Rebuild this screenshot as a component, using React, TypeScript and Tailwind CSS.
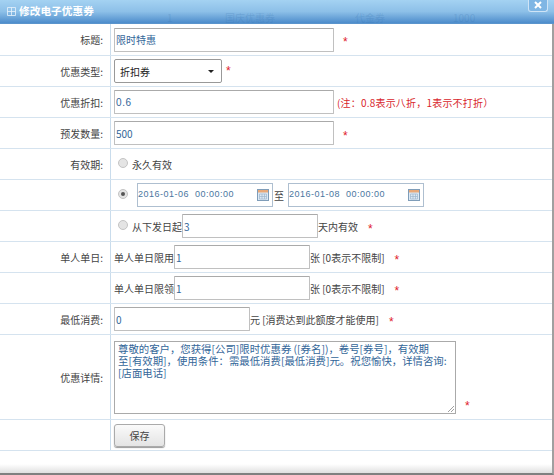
import type { ReactNode } from "react";

const font = "font-['Noto_Sans_CJK_SC','Liberation_Sans',sans-serif]";

function Row({ label, h = "h-[31px]", children }: { label?: string; h?: string; children: ReactNode }) {
  return (
    <div className={`flex ${h} shrink-0 border-b border-[#d5e3ef]`}>
      <div className="w-[111px] shrink-0 flex items-center justify-end pr-[7px] border-r border-[#c9dcec] text-[10px] text-[#444]">
        {label ? label + ":" : ""}
      </div>
      <div className="flex-1 flex items-center pl-[3px] text-[10px] text-[#444] whitespace-nowrap">{children}</div>
    </div>
  );
}

function Star({ className = "ml-[10px] mt-[5px]" }: { className?: string }) {
  return <span className={`text-[12px] leading-none text-[#e0202a] font-['Liberation_Sans',sans-serif] ${className}`}>*</span>;
}

function Input({ value, w, spaced }: { value: string; w: string; spaced?: boolean }) {
  return (
    <div
      className={`${w} h-6 shrink-0 flex items-center pl-[1px] border border-[#c0c0c0] border-t-[#aaa] rounded-[1px] bg-white text-[#336699] ${
        spaced ? "text-[10px] tracking-[0.6px] font-['Liberation_Sans',sans-serif]" : "text-[10px]"
      }`}
    >
      {value}
    </div>
  );
}

function Radio({ checked }: { checked?: boolean }) {
  return (
    <span className="w-[10px] h-[10px] ml-1 mr-1 -mt-[2px] shrink-0 rounded-full border border-[#c4c4c4] bg-[#e4e4e4] flex items-center justify-center">
      {checked && <span className="w-1 h-1 rounded-full bg-[#555]" />}
    </span>
  );
}

function CalendarIcon() {
  return (
    <svg width="12" height="12" viewBox="0 0 12 12" className="shrink-0">
      <rect x="0.5" y="0.5" width="11" height="11" fill="#dce9f5" stroke="#7f9db9" />
      <rect x="1" y="1" width="10" height="2.5" fill="#e8a878" />
      <path d="M2.5 5h7v5h-7z M2.5 7.5h7 M5 5v5 M7.5 5v5" fill="none" stroke="#9db6cc" strokeWidth="0.7" />
    </svg>
  );
}

function DateBox({ value }: { value: string }) {
  return (
    <div className="w-[136px] h-6 shrink-0 flex items-center justify-between border border-[#aebfd0] pr-[3px] bg-white">
      <span className="text-[9px] tracking-[0.5px] text-[#4a76a0] whitespace-pre font-['Liberation_Sans',sans-serif]">{value}</span>
      <CalendarIcon />
    </div>
  );
}

export default function App() {
  return (
    <div className={`w-[554px] h-[475px] bg-white overflow-hidden flex flex-col ${font}`}>
      <div className="relative h-[24px] shrink-0 overflow-hidden flex items-center justify-between pl-[7px] pr-[6px] bg-gradient-to-b from-[#a4d2f2] via-[#8dc0e8] to-[#4d8ccb] border-b border-[#5a94cc]">
        {/* page behind the dialog shows through the translucent title bar */}
        <div className="absolute inset-0 text-[10px] text-[#2d6aa8]/20">
          <span className="absolute left-[167px] top-[10px]">1</span>
          <span className="absolute left-[225px] top-[10px]">国庆优惠券</span>
          <span className="absolute left-[355px] top-[10px]">代金券</span>
          <span className="absolute left-[453px] top-[10px]">1000</span>
        </div>
        <div className="relative flex items-center gap-[3px] text-[10.7px] font-bold text-white">
          <svg width="9" height="9" viewBox="0 0 9 9">
            <path d="M0.5 0.5h8v8h-8z M0.5 4.5h8 M4.5 0.5v8" fill="none" stroke="#e8f3fb" strokeWidth="0.8" />
          </svg>
          修改电子优惠券
        </div>
        <div className="relative w-[20px] h-3 -mt-3 flex items-center justify-center border border-[#cfe4f6] border-t-0 rounded-b-[3px] bg-[#7fb6e4]">
          <svg width="8" height="8" viewBox="0 0 8 8">
            <path d="M1 1l6 6M7 1l-6 6" stroke="#fff" strokeWidth="2" />
          </svg>
        </div>
      </div>

      <div className="flex-1 flex flex-col border-r-2 border-[#a0a0a0] border-b-2 border-b-[#808080] bg-gradient-to-b from-white from-[98%] to-[#e0e0e0]">
        <Row label="标题" h="h-[32px]">
          <Input value="限时特惠" w="w-[220px]" />
          <Star className="ml-[9px] mt-[5px]" />
        </Row>
        <Row label="优惠类型">
          <div className="w-[108px] h-6 flex items-center justify-between pl-[5px] pr-[7px] border border-[#999] rounded-[2px] bg-white text-[10px] text-[#222]">
            折扣券
            <span className="w-0 h-0 border-x-[3px] border-x-transparent border-t-[3px] border-t-[#222]" />
          </div>
          <Star className="ml-1 -mt-[1px]" />
        </Row>
        <Row label="优惠折扣">
          <Input value="0.6" w="w-[220px]" spaced />
          <span className="ml-[3px] text-[10px] tracking-[0.2px] text-[#d8262c]">(注：0.8表示八折，1表示不打折）</span>
        </Row>
        <Row label="预发数量">
          <Input value="500" w="w-[220px]" />
          <Star className="ml-[9px] mt-[5px]" />
        </Row>
        <Row label="有效期">
          <Radio />
          <span>永久有效</span>
        </Row>
        <Row>
          <Radio checked />
          <span className="w-[5px]" />
          <DateBox value="2016-01-06  00:00:00" />
          <span className="w-[15px] pl-[1px] text-[10px]">至</span>
          <DateBox value="2016-01-08  00:00:00" />
        </Row>
        <Row>
          <Radio />
          <span>从下发日起</span>
          <Input value="3" w="w-[136px]" />
          <span>天内有效</span>
          <Star />
        </Row>
        <Row label="单人单日">
          <span>单人单日限用</span>
          <Input value="1" w="w-[136px]" />
          <span>张 [0表示不限制]</span>
          <Star />
        </Row>
        <Row>
          <span>单人单日限领</span>
          <Input value="1" w="w-[136px]" />
          <span>张 [0表示不限制]</span>
          <Star />
        </Row>
        <Row label="最低消费">
          <Input value="0" w="w-[136px]" />
          <span>元 [消费达到此额度才能使用]</span>
          <Star />
        </Row>
        <Row label="优惠详情" h="h-[85px]">
          <div className="relative w-[342px] h-[73px] shrink-0 border border-[#aaa] bg-white pl-[3px] pt-[1px] text-[10.4px] leading-[12.4px] text-[#336699] whitespace-pre">
            {"尊敬的客户，您获得[公司]限时优惠券 ([券名])，卷号[券号]，有效期\n至[有效期]，使用条件：需最低消费[最低消费]元。祝您愉快，详情咨询:\n[店面电话]"}
            <svg width="8" height="8" viewBox="0 0 8 8" className="absolute right-0 bottom-0">
              <path d="M1 7l6-6M4 7l3-3" stroke="#888" strokeWidth="0.8" />
            </svg>
          </div>
          <Star className="ml-[9px] mt-[58px]" />
        </Row>
        <Row>
          <button className="w-[51px] h-[23px] border border-[#aaa] rounded-[3px] bg-gradient-to-b from-[#fafafa] to-[#e4e4e4] shadow-[0_1px_1px_#999] text-[10px] text-[#444]">
            保存
          </button>
        </Row>
      </div>
    </div>
  );
}
